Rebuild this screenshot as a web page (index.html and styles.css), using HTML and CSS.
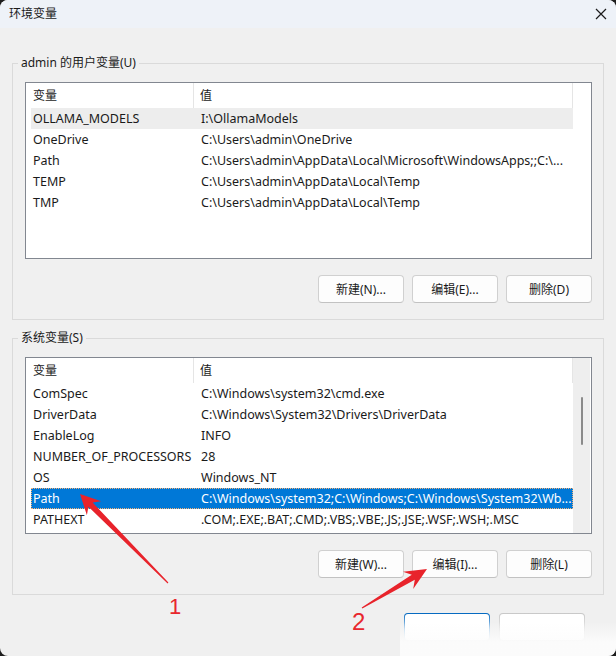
FILE: index.html
```html
<!DOCTYPE html>
<html lang="zh-CN">
<head>
    <meta charset="UTF-8">
    <meta name="viewport" content="width=device-width, initial-scale=1.0">
    <title>环境变量</title>
    <link rel="stylesheet" href="styles.css">
</head>
<body>
    <div class="window">
        <div class="titlebar">
            <span class="title">环境变量</span>
            <svg class="close-x" width="12" height="12" viewBox="0 0 12 12">
                <path d="M1 1 L11 11 M11 1 L1 11" stroke="#1b1b1b" stroke-width="1.2" fill="none"/>
            </svg>
        </div>

        <div class="content">
            <!-- 用户变量 -->
            <fieldset class="group">
                <legend>admin 的用户变量(U)</legend>
                <div class="list">
                    <div class="list-main">
                        <div class="list-head">
                            <div class="head-name">变量</div>
                            <div class="head-value">值</div>
                        </div>
                        <div class="row hot"><span class="name">OLLAMA_MODELS</span><span class="value">I:\OllamaModels</span></div>
                        <div class="row"><span class="name">OneDrive</span><span class="value">C:\Users\admin\OneDrive</span></div>
                        <div class="row"><span class="name">Path</span><span class="value">C:\Users\admin\AppData\Local\Microsoft\WindowsApps;;C:\...</span></div>
                        <div class="row"><span class="name">TEMP</span><span class="value">C:\Users\admin\AppData\Local\Temp</span></div>
                        <div class="row"><span class="name">TMP</span><span class="value">C:\Users\admin\AppData\Local\Temp</span></div>
                    </div>
                    <div class="list-side"></div>
                </div>
                <div class="actions">
                    <button>新建(N)...</button>
                    <button>编辑(E)...</button>
                    <button>删除(D)</button>
                </div>
            </fieldset>

            <!-- 系统变量 -->
            <fieldset class="group">
                <legend>系统变量(S)</legend>
                <div class="list">
                    <div class="list-main">
                        <div class="list-head">
                            <div class="head-name">变量</div>
                            <div class="head-value">值</div>
                        </div>
                        <div class="row"><span class="name">ComSpec</span><span class="value">C:\Windows\system32\cmd.exe</span></div>
                        <div class="row"><span class="name">DriverData</span><span class="value">C:\Windows\System32\Drivers\DriverData</span></div>
                        <div class="row"><span class="name">EnableLog</span><span class="value">INFO</span></div>
                        <div class="row"><span class="name">NUMBER_OF_PROCESSORS</span><span class="value">28</span></div>
                        <div class="row"><span class="name">OS</span><span class="value">Windows_NT</span></div>
                        <div class="row selected"><span class="name">Path</span><span class="value">C:\Windows\system32;C:\Windows;C:\Windows\System32\Wb...</span></div>
                        <div class="row"><span class="name">PATHEXT</span><span class="value">.COM;.EXE;.BAT;.CMD;.VBS;.VBE;.JS;.JSE;.WSF;.WSH;.MSC</span></div>
                    </div>
                    <div class="list-side scroll">
                        <div class="thumb"></div>
                    </div>
                </div>
                <div class="actions">
                    <button>新建(W)...</button>
                    <button>编辑(I)...</button>
                    <button>删除(L)</button>
                </div>
            </fieldset>

            <div class="footer">
                <button class="primary"></button>
                <button></button>
            </div>
        </div>

        <!-- 标注箭头 -->
        <svg class="marks" width="616" height="656" viewBox="0 0 616 656">
            <polygon points="168.4,582.6 92.6,502.5 101.2,501.2 80,494 86.9,515.2 88.4,506.7 167.6,583.4"/>
            <text x="169" y="614" font-size="22">1</text>
            <polygon points="362.3,608.5 414.8,579.7 413.2,588.9 427,569 403,571.7 411.8,574.7 361.7,607.5"/>
            <text x="352" y="630" font-size="24">2</text>
        </svg>
        <div class="fade"></div>
    </div>
</body>
</html>
```

FILE: styles.css
```css
body {
    margin: 0;
    background-color: #1e1e1e;
    font-family: "Noto Sans", "Noto Sans CJK SC", sans-serif;
    font-size: 12px;
    color: #1a1a1a;
}
.window {
    position: relative;
    width: 616px;
    height: 656px;
    background-color: #f0f0f0;
    border-radius: 8px;
    overflow: hidden;
}
.titlebar {
    height: 28px;
    background-color: #eef2f8;
    display: flex;
    align-items: center;
    justify-content: space-between;
    padding: 0 9px;
    box-sizing: border-box;
}
.title {
    font-size: 12px;
    line-height: 16px;
}
.close-x {
    display: block;
    flex-shrink: 0;
}
.content {
    padding: 27px 12px 0 12px;
}
.group {
    margin: 0 0 10px 0;
    padding: 11px 11px 16px 12px;
    border: 1px solid #dadada;
}
.group legend {
    margin-left: -7px;
    padding: 0 3px;
    line-height: 16px;
    font-size: 12px;
}
.list {
    display: flex;
    height: 177px;
    box-sizing: border-box;
    border: 1px solid #828790;
    background-color: #fff;
    overflow: hidden;
}
.list-main {
    width: 547px;
    overflow: hidden;
}
.list-side {
    width: 18px;
}
.list-side.scroll {
    background-color: #eeeeee;
    border-right: 1px solid #fff;
    box-sizing: border-box;
}
.thumb {
    margin: 39px 0 0 8px;
    width: 2px;
    height: 48px;
    border-radius: 1px;
    background-color: #8a8a8a;
}
.list-head {
    display: flex;
    height: 25px;
    line-height: 25px;
}
.head-name {
    width: 168px;
    padding-left: 7px;
    box-sizing: border-box;
    border-right: 1px solid #e5e5e5;
}
.head-value {
    flex: 1;
    padding-left: 6px;
    border-right: 1px solid #e5e5e5;
}
.row {
    display: flex;
    height: 21px;
    line-height: 21px;
    margin-left: 5px;
    font-size: 12.5px;
    white-space: nowrap;
}
.row .name {
    width: 168px;
    padding-left: 2px;
    box-sizing: border-box;
    overflow: hidden;
}
.row .value {
    flex: 1;
    padding-left: 2px;
    overflow: hidden;
}
.row.hot {
    background-color: #ededed;
}
.row.selected {
    background-color: #0078d7;
    color: #fff;
    outline: 1px dotted #f3b27a;
    outline-offset: -1px;
}
.actions {
    display: flex;
    justify-content: flex-end;
    gap: 8px;
    margin-top: 16px;
}
button {
    width: 86px;
    height: 28px;
    padding: 0;
    border: 1px solid #d0d0d0;
    border-bottom-color: #c2c2c2;
    border-radius: 4px;
    background-color: #fdfdfd;
    font-family: "Noto Sans", "Noto Sans CJK SC", sans-serif;
    font-size: 12px;
    color: #1a1a1a;
}
.footer {
    display: flex;
    justify-content: flex-end;
    gap: 9px;
    margin: 18px 19px 0 0;
}
.footer button {
    border: 1px solid transparent;
    background: linear-gradient(#fff, #fff) padding-box,
                linear-gradient(#c8c8c8, #ececec 70%) border-box;
}
.footer button.primary {
    background: linear-gradient(#fff, #fff) padding-box,
                linear-gradient(#0067c0, #bcd8ef 60%, #f2f2f2) border-box;
}
/* стрелки и цифры поверх окна */
.marks {
    position: absolute;
    left: 0;
    top: 0;
    pointer-events: none;
}
.marks polygon {
    fill: #e8232b;
}
.marks text {
    fill: #e8272d;
    font-family: "Liberation Sans", sans-serif;
}
.fade {
    position: absolute;
    right: 0;
    bottom: 0;
    width: 216px;
    height: 34px;
    background: linear-gradient(rgba(255, 255, 255, 0), rgba(252, 252, 252, 0.92) 60%);
    pointer-events: none;
}
```
